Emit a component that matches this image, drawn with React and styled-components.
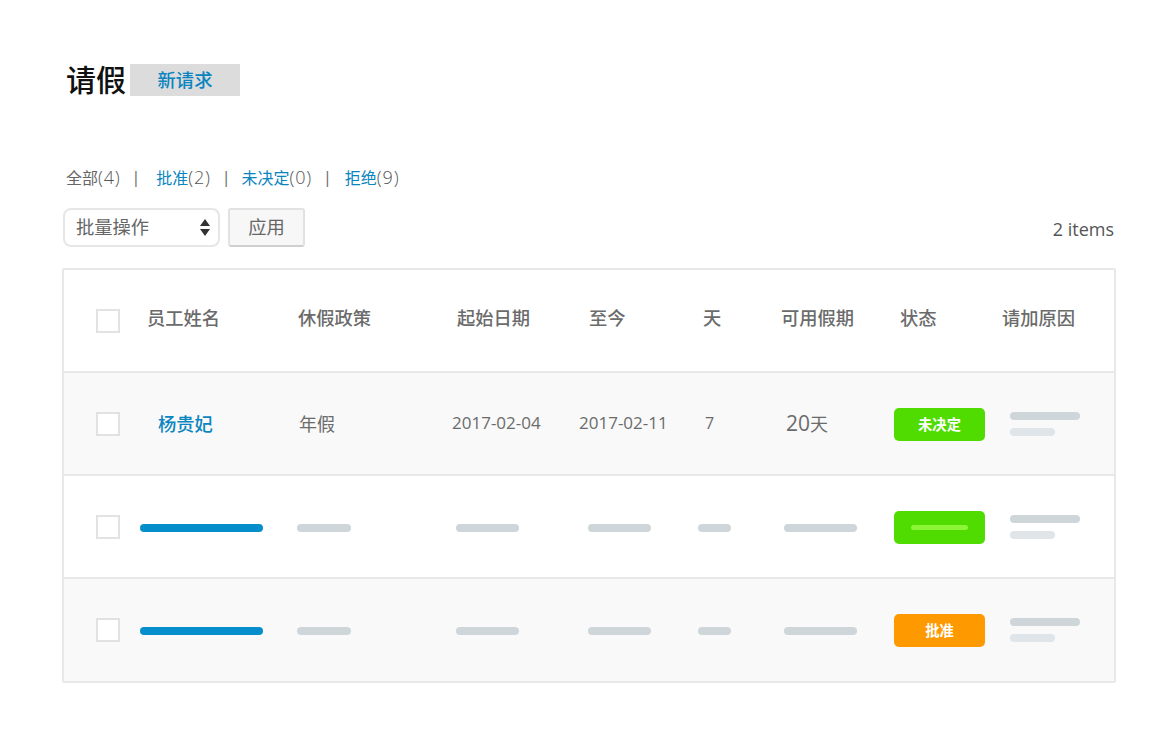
import React from 'react';
import styled, { createGlobalStyle } from 'styled-components';

const GlobalStyle = createGlobalStyle`
  html, body {
    margin: 0;
    background: #fff;
    font-family: "Open Sans", "Noto Sans CJK SC", sans-serif;
    color: #666;
  }
`;

const Page = styled.div`
  padding: 64px 55px 0 62px;
`;

const TitleRow = styled.div`
  display: flex;
  align-items: center;
  height: 32px;
  padding-left: 4px;
`;

const Title = styled.h1`
  margin: 0 4px 0 0;
  font-size: 30px;
  font-weight: 500;
  line-height: 32px;
  color: #111;
`;

const NewRequest = styled.a`
  box-sizing: border-box;
  display: flex;
  align-items: center;
  justify-content: center;
  width: 110px;
  height: 32px;
  padding-bottom: 2px;
  background: #dcdcdc;
  color: #0a85c0;
  font-size: 18.3px;
  font-weight: 500;
`;

const Filters = styled.div`
  display: flex;
  align-items: center;
  height: 20px;
  margin-top: 71px;
  padding-left: 4px;
  font-size: 16px;
  line-height: 20px;
`;

const FilterLink = styled.a`
  color: #0a85c0;
`;

const Count = styled.span`
  font-size: 18px;
  font-weight: 300;
  letter-spacing: 0.8px;
  color: #555;
`;

const Sep = styled.span`
  margin: 0 ${p => p.$after}px 0 11px;
  color: #666;
`;

const Toolbar = styled.div`
  display: flex;
  align-items: center;
  justify-content: space-between;
  height: 39px;
  margin-top: 21px;
  padding-left: 1px;
`;

const Actions = styled.div`
  display: flex;
  gap: 8px;
`;

const BulkSelect = styled.div`
  box-sizing: border-box;
  display: flex;
  align-items: center;
  justify-content: space-between;
  width: 157px;
  height: 39px;
  padding: 0 8px 0 11px;
  border: 2px solid #e6e6e6;
  border-radius: 8px;
  background: #fff;
  font-size: 18.3px;
`;

const SelectLabel = styled.span`
  margin-bottom: 3px;
`;

const ApplyButton = styled.button`
  box-sizing: border-box;
  width: 77px;
  height: 39px;
  padding: 0 0 3px;
  border: 2px solid #e2e2e2;
  border-bottom-color: #cfcfcf;
  border-radius: 3px;
  background: #f7f7f7;
  color: #666;
  font-family: inherit;
  font-size: 18.3px;
`;

const ItemCount = styled.span`
  margin: 3px 2px 0 0;
  font-size: 18px;
  color: #555;
`;

const Table = styled.div`
  margin-top: 21px;
  border: 2px solid #e8e8e8;
  border-radius: 2px;
`;

const Row = styled.div`
  box-sizing: border-box;
  display: grid;
  grid-template-columns: ${p => p.$columns};
  align-items: center;
  height: 103px;
  padding-left: 32px;
  border-bottom: 2px solid #e8e8e8;
  background: ${p => (p.$shaded ? '#f9f9f9' : '#fff')};
  &:last-child {
    height: 102px;
    border-bottom: 1px solid #f9f9f9;
  }
`;

const CheckBox = styled.span`
  box-sizing: border-box;
  display: block;
  width: 24px;
  height: 24px;
  border: 2px solid #e2e2e2;
  background: #fff;
`;

const HeadCell = styled.div`
  padding-bottom: 7px;
  font-size: 18.3px;
  font-weight: 500;
  color: #6b6b6b;
  white-space: nowrap;
`;

const Cell = styled.div`
  padding-bottom: 2px;
  font-size: ${p => p.$size || 18}px;
  color: #6b6b6b;
  white-space: nowrap;
`;

const Amount = styled.span`
  font-size: 21px;
`;

const NameLink = styled.a`
  padding-bottom: 2px;
  font-size: 18.3px;
  font-weight: 500;
  color: #0a85c0;
`;

const Bar = styled.div`
  width: ${p => p.$width}px;
  height: 8px;
  margin-top: 2px;
  border-radius: 4px;
  background: ${p => p.$color || '#cfd6d9'};
`;

const Badge = styled.div`
  display: flex;
  align-items: center;
  justify-content: center;
  width: 91px;
  height: 33px;
  margin-top: 2px;
  border-radius: 5px;
  background: ${p => p.$color};
  color: #fff;
  font-size: 14.3px;
  font-weight: 700;
`;

const BadgeLabel = styled.span`
  margin-bottom: 3px;
`;

const BadgeBar = styled.span`
  display: block;
  width: 57px;
  height: 5px;
  border-radius: 3px;
  background: #8cf536;
`;

const Reason = styled.div`
  display: flex;
  flex-direction: column;
  gap: 8px;
`;

const ReasonLine = styled.span`
  display: block;
  width: ${p => p.$width}px;
  height: 8px;
  border-radius: 4px;
  background: ${p => p.$color};
`;

const HEAD_COLUMNS = '51px 151px 159px 132px 114px 78px 119px 102px 1fr';
const TEXT_COLUMNS = '62px 141px 153px 127px 126px 81px 108px 116px 1fr';
const BAR_COLUMNS = '44px 157px 159px 132px 110px 86px 110px 116px 1fr';

const headings = ['员工姓名', '休假政策', '起始日期', '至今', '天', '可用假期', '状态', '请加原因'];

const ReasonBars = () => (
  <Reason>
    <ReasonLine $width={70} $color="#cfd6d9" />
    <ReasonLine $width={45} $color="#dfe5e8" />
  </Reason>
);

const BarRow = ({ shaded, badge }) => (
  <Row $columns={BAR_COLUMNS} $shaded={shaded}>
    <CheckBox />
    <Bar $width={123} $color="#058ecb" />
    <Bar $width={54} />
    <Bar $width={63} />
    <Bar $width={63} />
    <Bar $width={33} />
    <Bar $width={73} />
    {badge}
    <ReasonBars />
  </Row>
);

export default function App() {
  return (
    <Page>
      <GlobalStyle />
      <TitleRow>
        <Title>请假</Title>
        <NewRequest>新请求</NewRequest>
      </TitleRow>

      <Filters>
        <span>全部<Count>(4)</Count></span>
        <Sep $after={16}>|</Sep>
        <span><FilterLink>批准</FilterLink><Count>(2)</Count></span>
        <Sep $after={11}>|</Sep>
        <span><FilterLink>未决定</FilterLink><Count>(0)</Count></span>
        <Sep $after={13}>|</Sep>
        <span><FilterLink>拒绝</FilterLink><Count>(9)</Count></span>
      </Filters>

      <Toolbar>
        <Actions>
          <BulkSelect>
            <SelectLabel>批量操作</SelectLabel>
            <svg width="10" height="17" viewBox="0 0 10 17">
              <path d="M5 0 L10 7 L0 7 Z M0 10 L10 10 L5 17 Z" fill="#333" />
            </svg>
          </BulkSelect>
          <ApplyButton>应用</ApplyButton>
        </Actions>
        <ItemCount>2 items</ItemCount>
      </Toolbar>

      <Table>
        <Row $columns={HEAD_COLUMNS}>
          <CheckBox />
          {headings.map(h => <HeadCell key={h}>{h}</HeadCell>)}
        </Row>
        <Row $columns={TEXT_COLUMNS} $shaded>
          <CheckBox />
          <NameLink>杨贵妃</NameLink>
          <Cell>年假</Cell>
          <Cell $size={17}>2017-02-04</Cell>
          <Cell $size={17}>2017-02-11</Cell>
          <Cell $size={16}>7</Cell>
          <Cell><Amount>20</Amount>天</Cell>
          <Badge $color="#50dc00"><BadgeLabel>未决定</BadgeLabel></Badge>
          <ReasonBars />
        </Row>
        <BarRow badge={<Badge $color="#50dc00"><BadgeBar /></Badge>} />
        <BarRow shaded badge={<Badge $color="#ff9900"><BadgeLabel>批准</BadgeLabel></Badge>} />
      </Table>
    </Page>
  );
}
